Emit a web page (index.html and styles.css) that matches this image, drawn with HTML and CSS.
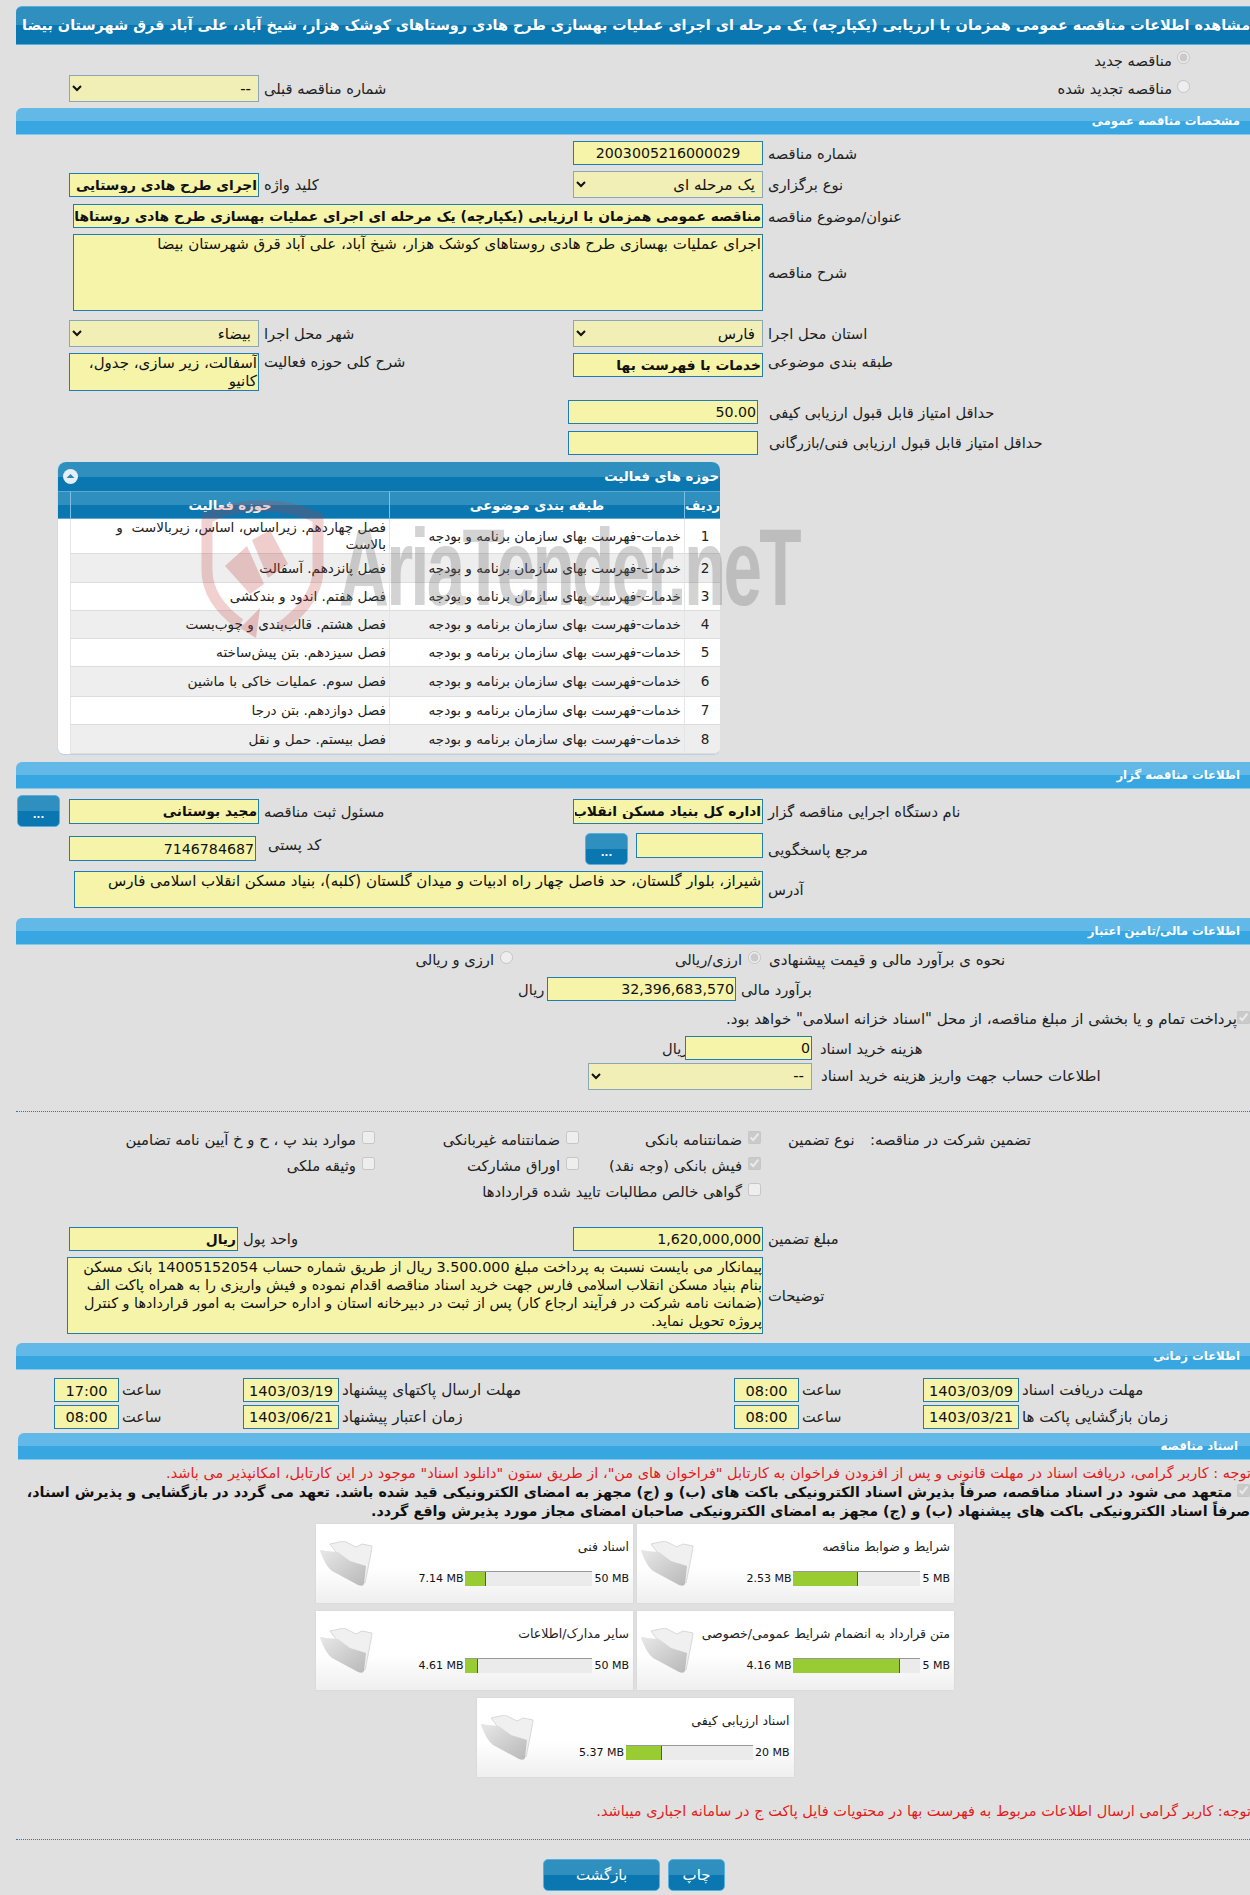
FILE: index.html
```html
<!DOCTYPE html>
<html lang="fa">
<head>
<meta charset="utf-8">
<title>مشاهده اطلاعات مناقصه</title>
<link rel="stylesheet" href="styles.css">
</head>
<body>
<div class="page">
  <div class="title-bar"><span>مشاهده اطلاعات مناقصه عمومی همزمان با ارزیابی (یکپارچه) یک مرحله ای اجرای عملیات بهسازی طرح هادی روستاهای کوشک هزار، شیخ آباد، علی آباد قرق شهرستان بیضا</span></div>

  <div class="row h30"><div class="radio-right first"><input type="radio" disabled checked><label>مناقصه جدید</label></div></div>
  <div class="row h27">
    <div class="cell-l"><select class="sel w190" dir="rtl" disabled><option>--</option></select><label>شماره مناقصه قبلی</label></div>
    <div class="radio-right push"><input type="radio" disabled><label>مناقصه تجدید شده</label></div>
  </div>

  <div class="section mt6">مشخصات مناقصه عمومی</div>

  <div class="row h24 mt6">
    <div class="cell-l"></div>
    <div class="cell-r"><input class="inp w190 center" value="2003005216000029" readonly><label>شماره مناقصه</label></div>
  </div>
  <div class="row h27 mt6">
    <div class="cell-l"><input class="inp w190 bold" value="اجرای طرح هادی روستایی" readonly><label>کلید واژه</label></div>
    <div class="cell-r"><select class="sel w190" dir="rtl" disabled><option>یک مرحله ای</option></select><label>نوع برگزاری</label></div>
  </div>
  <div class="row h24 mt6">
    <div class="cell-wide"><input class="inp w690 bold" value="مناقصه عمومی همزمان با ارزیابی (یکپارچه) یک مرحله ای اجرای عملیات بهسازی طرح هادی روستاهای کوشک هزار، شیخ آباد" readonly><label>عنوان/موضوع مناقصه</label></div>
  </div>
  <div class="row h77 mt6">
    <div class="cell-wide"><textarea class="inp area w690" readonly>اجرای عملیات بهسازی طرح هادی روستاهای کوشک هزار، شیخ آباد، علی آباد قرق شهرستان بیضا</textarea><label>شرح مناقصه</label></div>
  </div>
  <div class="row h27 mt9">
    <div class="cell-l"><select class="sel w190" dir="rtl" disabled><option>بیضاء</option></select><label>شهر محل اجرا</label></div>
    <div class="cell-r"><select class="sel w190" dir="rtl" disabled><option>فارس</option></select><label>استان محل اجرا</label></div>
  </div>
  <div class="row h38 mt6 top">
    <div class="cell-l"><textarea class="inp area w190 h38" readonly>آسفالت، زیر سازی، جدول، کانیو</textarea><label>شرح کلی حوزه فعالیت</label></div>
    <div class="cell-r"><input class="inp w190 h24 bold" value="خدمات با فهرست بها" readonly><label>طبقه بندی موضوعی</label></div>
  </div>
  <div class="row h24 mt9">
    <div class="cell-score"><input class="inp w190 big" value="50.00" readonly><label>حداقل امتیاز قابل قبول ارزیابی کیفی</label></div>
  </div>
  <div class="row h25 mt6">
    <div class="cell-score"><input class="inp w190" value="" readonly><label>حداقل امتیاز قابل قبول ارزیابی فنی/بازرگانی</label></div>
  </div>

  <div class="panel">
    <div class="panel-head"><span class="collapse"><svg viewBox="0 0 15 15" width="15" height="15"><circle cx="7.5" cy="7.5" r="7.5" fill="#e6eff5"/><path d="M3.5 9 L7.5 5 L11.5 9 Z" fill="#2f86b8"/></svg></span><span>حوزه های فعالیت</span></div>
    <table class="grid" dir="rtl">
      <colgroup><col class="c-num"><col class="c-sub"><col class="c-act"><col class="c-pad"></colgroup>
      <thead><tr><th>ردیف</th><th>طبقه بندی موضوعی</th><th>حوزه فعالیت</th><th></th></tr></thead>
      <tbody>
        <tr class="r35"><td class="num">1</td><td>خدمات-فهرست بهای سازمان برنامه و بودجه</td><td>فصل چهاردهم. زیراساس، اساس، زیربالاست&nbsp; و<br>بالاست</td><td class="pad"></td></tr>
        <tr class="alt r29"><td class="num">2</td><td>خدمات-فهرست بهای سازمان برنامه و بودجه</td><td>فصل پانزدهم. آسفالت</td><td class="pad"></td></tr>
        <tr class="r28"><td class="num">3</td><td>خدمات-فهرست بهای سازمان برنامه و بودجه</td><td>فصل هفتم. اندود و بندکشی</td><td class="pad"></td></tr>
        <tr class="alt r28"><td class="num">4</td><td>خدمات-فهرست بهای سازمان برنامه و بودجه</td><td>فصل هشتم. قالب‌بندی و چوب‌بست</td><td class="pad"></td></tr>
        <tr class="r28"><td class="num">5</td><td>خدمات-فهرست بهای سازمان برنامه و بودجه</td><td>فصل سیزدهم. بتن پیش‌ساخته</td><td class="pad"></td></tr>
        <tr class="alt r30"><td class="num">6</td><td>خدمات-فهرست بهای سازمان برنامه و بودجه</td><td>فصل سوم. عملیات خاکی با ماشین</td><td class="pad"></td></tr>
        <tr class="r28"><td class="num">7</td><td>خدمات-فهرست بهای سازمان برنامه و بودجه</td><td>فصل دوازدهم. بتن درجا</td><td class="pad"></td></tr>
        <tr class="alt r29"><td class="num">8</td><td>خدمات-فهرست بهای سازمان برنامه و بودجه</td><td>فصل بیستم. حمل و نقل</td><td class="pad"></td></tr>
      </tbody>
    </table>
    <div class="wm-shield">
      <svg viewBox="0 0 125 140" width="125" height="140"><path d="M62 6 Q30 6 7 18 L7 70 Q7 100 40 124" fill="none" stroke="#c43c3c" stroke-opacity=".24" stroke-width="11"/><path d="M62 6 Q94 6 118 18 L118 70 Q118 100 80 128" fill="none" stroke="#c43c3c" stroke-opacity=".24" stroke-width="11"/><path d="M25 66 L47 46 L64 84 L50 94 Z M52 40 L70 30 L88 64 L68 78 Z" fill="#c43c3c" fill-opacity=".26"/><path d="M40 128 L60 108 L56 138 Z" fill="#c43c3c" fill-opacity=".28"/></svg>
    </div>
    <div class="wm-text" dir="ltr">AriaTender.neT</div>
  </div>

  <div class="section mt8">اطلاعات مناقصه گزار</div>

  <div class="row h32 mt6">
    <div class="cell-l cell-btn"><button class="dots" disabled>...</button><input class="inp w190 h25 bold" value="مجید بوستانی" readonly><label>مسئول ثبت مناقصه</label></div>
    <div class="cell-r"><input class="inp w190 h25 bold" value="اداره کل بنیاد مسکن انقلاب اسلامی فارس" readonly><label>نام دستگاه اجرایی مناقصه گزار</label></div>
  </div>
  <div class="row h31 mt6 top">
    <div class="cell-l drop3"><input class="inp w187 h25 big" value="7146784687" readonly><label class="gap">کد پستی</label></div>
    <div class="cell-ref"><button class="dots" disabled>...</button><input class="inp w127 h25" value="" readonly><label>مرجع پاسخگویی</label></div>
  </div>
  <div class="row h37 mt7">
    <div class="cell-addr"><textarea class="inp area w689" readonly>شیراز، بلوار گلستان، حد فاصل چهار راه ادبیات و میدان گلستان (کلبه)، بنیاد مسکن انقلاب اسلامی فارس</textarea><label>آدرس</label></div>
  </div>

  <div class="section mt10">اطلاعات مالی/تامین اعتبار</div>

  <div class="row h23 mt5 fin-radios">
    <div class="fr-2"><input type="radio" disabled><label>ارزی و ریالی</label></div>
    <div class="fr-1"><input type="radio" disabled checked><label>ارزی/ریالی</label></div>
    <label class="fr-lab">نحوه ی برآورد مالی و قیمت پیشنهادی</label>
  </div>
  <div class="row h24 mt4 est">
    <label class="unit">ریال</label><input class="inp w189 big" value="32,396,683,570" readonly><label>برآورد مالی</label>
  </div>
  <div class="row h24 mt8 treasury"><label>پرداخت تمام و یا بخشی از مبلغ مناقصه، از محل "اسناد خزانه اسلامی" خواهد بود.</label><input type="checkbox" disabled checked></div>
  <div class="row h24 mt3 fee">
    <label class="unit">ریال</label><input class="inp w127 big" value="0" readonly><label>هزینه خرید اسناد</label>
  </div>
  <div class="row h26 mt3 fee-acc">
    <select class="sel w224" dir="rtl" disabled><option>--</option></select><label>اطلاعات حساب جهت واریز هزینه خرید اسناد</label>
  </div>
  <div class="dotted d1"></div>

  <div class="guar" dir="rtl">
    <div class="g-head"><span>تضمین شرکت در مناقصه:</span><span>نوع تضمین</span></div>
    <div class="g-grid">
      <div class="g-item"><input type="checkbox" disabled checked><label>ضمانتنامه بانکی</label></div>
      <div class="g-item"><input type="checkbox" disabled><label>ضمانتنامه غیربانکی</label></div>
      <div class="g-item"><input type="checkbox" disabled><label>موارد بند پ ، ح و خ آیین نامه تضامین</label></div>
      <div class="g-item"><input type="checkbox" disabled checked><label>فیش بانکی (وجه نقد)</label></div>
      <div class="g-item"><input type="checkbox" disabled><label>اوراق مشارکت</label></div>
      <div class="g-item"><input type="checkbox" disabled><label>وثیقه ملکی</label></div>
      <div class="g-item g-span"><input type="checkbox" disabled><label>گواهی خالص مطالبات تایید شده قراردادها</label></div>
    </div>
  </div>

  <div class="row h25 mt19">
    <div class="cell-l"><input class="inp w169 bold" value="ریال" readonly><label>واحد پول</label></div>
    <div class="cell-r"><input class="inp w190 big" value="1,620,000,000" readonly><label>مبلغ تضمین</label></div>
  </div>
  <div class="row h77 mt6">
    <div class="cell-note"><textarea class="inp area w696 note" readonly>پیمانکار می بایست نسبت به پرداخت مبلغ 3.500.000 ریال از طریق شماره حساب 14005152054 بانک مسکن بنام بنیاد مسکن انقلاب اسلامی فارس جهت خرید اسناد مناقصه اقدام نموده و فیش واریزی را به همراه پاکت الف (ضمانت نامه شرکت در فرآیند ارجاع کار) پس از ثبت در دبیرخانه استان و اداره حراست به امور قراردادها و کنترل پروژه تحویل نماید.</textarea><label>توضیحات</label></div>
  </div>

  <div class="section mt9">اطلاعات زمانی</div>

  <div class="row h24 mt8 times">
    <input class="inp w65 tm" value="17:00" readonly><label class="t-l">ساعت</label>
    <input class="inp w96 tm" value="1403/03/19" readonly><label class="t-d">مهلت ارسال پاکتهای پیشنهاد</label>
    <input class="inp w65 tm" value="08:00" readonly><label class="t-l">ساعت</label>
    <input class="inp w96 tm" value="1403/03/09" readonly><label>مهلت دریافت اسناد</label>
  </div>
  <div class="row h25 mt2 times">
    <input class="inp w65 tm" value="08:00" readonly><label class="t-l">ساعت</label>
    <input class="inp w96 tm" value="1403/06/21" readonly><label class="t-d">زمان اعتبار پیشنهاد</label>
    <input class="inp w65 tm" value="08:00" readonly><label class="t-l">ساعت</label>
    <input class="inp w96 tm" value="1403/03/21" readonly><label>زمان بازگشایی پاکت ها</label>
  </div>

  <div class="section s5">اسناد مناقصه</div>

  <p class="note-red n1">توجه : کاربر گرامی، دریافت اسناد در مهلت قانونی و پس از افزودن فراخوان به کارتابل "فراخوان های من"، از طریق ستون "دانلود اسناد" موجود در این کارتابل، امکانپذیر می باشد.</p>
  <p class="commit"><input type="checkbox" disabled checked>متعهد می شود در اسناد مناقصه، صرفاً بذیرش اسناد الکترونیکی باکت های (ب) و (ج) مجهز به امضای الکترونیکی قید شده باشد. تعهد می گردد در بازگشایی و پذیرش اسناد، صرفاً اسناد الکترونیکی باکت های پیشنهاد (ب) و (ج) مجهز به امضای الکترونیکی صاحبان امضای مجاز مورد پذیرش واقع گردد.</p>

  <div class="cards" dir="rtl">
    <div class="card">
      <div class="card-title">شرایط و ضوابط مناقصه</div>
      <div class="card-meter"><span>5 MB</span><div class="bar"><div class="fill" style="width:51%"></div></div><span>2.53 MB</span></div>
      <svg class="folder" viewBox="0 0 53 46" width="53" height="46"><use href="#folder"/></svg>
    </div>
    <div class="card">
      <div class="card-title">اسناد فنی</div>
      <div class="card-meter"><span>50 MB</span><div class="bar"><div class="fill" style="width:16%"></div></div><span>7.14 MB</span></div>
      <svg class="folder" viewBox="0 0 53 46" width="53" height="46"><use href="#folder"/></svg>
    </div>
    <div class="card">
      <div class="card-title">متن قرارداد به انضمام شرایط عمومی/خصوصی</div>
      <div class="card-meter"><span>5 MB</span><div class="bar"><div class="fill" style="width:84%"></div></div><span>4.16 MB</span></div>
      <svg class="folder" viewBox="0 0 53 46" width="53" height="46"><use href="#folder"/></svg>
    </div>
    <div class="card">
      <div class="card-title">سایر مدارک/اطلاعات</div>
      <div class="card-meter"><span>50 MB</span><div class="bar"><div class="fill" style="width:10%"></div></div><span>4.61 MB</span></div>
      <svg class="folder" viewBox="0 0 53 46" width="53" height="46"><use href="#folder"/></svg>
    </div>
    <div class="card">
      <div class="card-title">اسناد ارزیابی کیفی</div>
      <div class="card-meter"><span>20 MB</span><div class="bar"><div class="fill" style="width:28%"></div></div><span>5.37 MB</span></div>
      <svg class="folder" viewBox="0 0 53 46" width="53" height="46"><use href="#folder"/></svg>
    </div>
  </div>

  <p class="note-red n2">توجه: کاربر گرامی ارسال اطلاعات مربوط به فهرست بها در محتویات فایل پاکت ج در سامانه اجباری میباشد.</p>
  <div class="dotted d2"></div>
  <div class="actions">
    <button class="act back" disabled>بازگشت</button>
    <button class="act print" disabled>چاپ</button>
  </div>
</div>
<svg class="defs" width="0" height="0" aria-hidden="true"><defs>
  <linearGradient id="fg" x1="0" y1="0" x2="1" y2="1"><stop offset="0" stop-color="#e8e8e8"/><stop offset="1" stop-color="#b8b8b8"/></linearGradient>
  <g id="folder"><path d="M10 3 L24 0 L36 6 L42 3 L52 5 Q52 8 45 42 L30 30 Z" fill="#f0f0f0" stroke="#d8d8d8"/><path d="M0 10 Q0 8 6 10 L18 11 L30 20 L46 25 L44 43 Q43 46 38 44 L12 30 Q6 26 0 10 Z" fill="url(#fg)"/></g>
</defs></svg>
</body>
</html>
```
FILE: styles.css
```css
* { box-sizing: border-box; }
html, body { margin: 0; padding: 0; background: #e0e0e0; overflow-x: hidden; }
body { width: 1250px; height: 1895px; overflow: hidden; }
.page { width: 1250px; padding: 6px 0 0 16px; font: 14.7px "DejaVu Sans", sans-serif; color: #222; position: relative; }
label { white-space: nowrap; }
.defs { position: absolute; }

.title-bar {
  width: 1254px; height: 39px; border-radius: 6px 0 0 0; overflow: hidden; white-space: nowrap;
  background: linear-gradient(#2f90bf 0 50%, #0a77b0 50% 100%);
  border-top: 1px solid #56aedd; border-bottom: 1px solid #56aedd;
  color: #fff; font-size: 14.4px; font-weight: bold; line-height: 37px; padding-left: 6px; direction: ltr;
}
.title-bar span { direction: rtl; unicode-bidi: embed; display: inline-block; }

.section {
  width: 1234px; height: 27px; border-radius: 6px 0 0 0; direction: rtl;
  background: linear-gradient(#62b9e8 0 50%, #38a6e0 50% 100%);
  border-bottom: 1px solid #7fcbf0; color: #fff; font-size: 11.7px; font-weight: bold; line-height: 26px; padding-right: 10px;
}
.section.s5 { margin: 4px 0 0 2px; width: 1232px; padding-right: 12px; }

.row { display: flex; align-items: center; width: 1234px; }
.row.top { align-items: flex-start; }
.row.top > div { align-items: flex-start; }
.h23 { height: 23px; } .h24 { height: 24px; } .h25 { height: 25px; } .h26 { height: 26px; } .h27 { height: 27px; }
.h30 { height: 30px; } .h31 { height: 31px; } .h32 { height: 32px; } .h37 { height: 37px; } .h38 { height: 38px; } .h77 { height: 77px; }
.mt2 { margin-top: 2px; } .mt3 { margin-top: 3px; } .mt4 { margin-top: 4px; } .mt5 { margin-top: 5px; } .mt6 { margin-top: 6px; } .mt7 { margin-top: 7px; } .mt8 { margin-top: 8px; }
.mt9 { margin-top: 9px; } .mt10 { margin-top: 10px; } .mt19 { margin-top: 19px; }

.cell-l, .cell-r, .cell-wide, .cell-score, .cell-ref, .cell-addr, .cell-note { display: flex; align-items: center; gap: 5px; }
.cell-l { width: 557px; padding-left: 53px; flex: none; }
.cell-r { flex: none; }
.cell-wide { padding-left: 57px; }
.cell-score { padding-left: 552px; }
.cell-score label { margin-left: 6px; }
.cell-ref { margin-left: 12px; flex: none; }
.cell-ref .dots { margin-right: 3px; }
.cell-ref label { margin-top: 8px; }
.cell-addr { padding-left: 58px; }
.cell-note { padding-left: 51px; }
.cell-btn { padding-left: 1px; }
.cell-btn .dots { margin-right: 4px; }
.drop3 { margin-top: 3px; }
.gap { margin-left: 7px; }

.inp, .sel {
  height: 24px; border: 1px solid #1f7db4; border-radius: 0; background: #f6f4a8; color: #111;
  font: 14.2px "DejaVu Sans", sans-serif; padding: 0 1px; direction: rtl; outline: none; flex: none; margin: 0;
}
.sel { height: 27px; background-color: #f1efb6; border-color: #8aa6b8; color: #111; opacity: 1; padding: 0 3px; font-size: 15px; }
.inp.area { resize: none; overflow: hidden; line-height: 18px; padding: 0 1px; font-size: 15px; }
.inp.area.note { font-size: 14.4px; padding: 0; }
.inp.h38 { height: 38px; }
.inp.h24 { height: 24px; }
.inp.h25 { height: 25px; }
.inp.bold { font-weight: bold; font-size: 13.8px; }
.big { font-size: 14.2px; }
.center { text-align: center; direction: ltr; }
.inp.tm { text-align: center; direction: ltr; font-size: 14.6px; }
.w65 { width: 65px; } .w96 { width: 96px; } .w127 { width: 127px; } .w169 { width: 169px; } .w187 { width: 187px; } .w189 { width: 189px; }
.w190 { width: 190px; } .w224 { width: 224px; } .w689 { width: 689px; } .w690 { width: 690px; } .w696 { width: 696px; }
.h77 .inp.area { height: 77px; }
.h37 .inp.area { height: 37px; }

.radio-right { display: flex; align-items: center; direction: rtl; width: 190px; gap: 5px; flex: none; }
.radio-right input { margin: 0 0 5px; }
.radio-right.first { margin-left: 984px; }
.radio-right.push { margin-left: 427px; }

.panel { position: relative; margin: 7px 0 0 42px; width: 662px; height: 292px; background: #fff; border-radius: 8px 8px 6px 6px; box-shadow: 0 1px 0 #b8d4e4, -1px 0 0 #c6dde9; }
.panel-head {
  height: 29px; border-radius: 8px 8px 0 0; display: flex; justify-content: space-between; align-items: center; padding: 0 1px 0 5px;
  background: linear-gradient(#2f90bf 0 50%, #0a77b0 50% 100%); color: #fff; font-weight: bold; font-size: 13.3px; direction: ltr;
}
.collapse { display: flex; }
.grid { width: 662px; border-collapse: separate; border-spacing: 0; table-layout: fixed; font-size: 13.6px; }
.c-num { width: 36px; } .c-sub { width: 295px; } .c-act { width: 319px; } .c-pad { width: 12px; }
.grid th { height: 28px; background: linear-gradient(#2f90bf 0 50%, #0a77b0 50% 100%); color: #fff; font-size: 13.2px; font-weight: bold; padding: 0; border-left: 1px solid #7cc0e4; border-top: 1px solid #58a9d6; border-bottom: 1px solid #58a9d6; }
.grid th:last-child { border-left: 0; }
.grid td { padding: 0 3px; border-left: 1px solid #e6e6e6; border-bottom: 1px solid #dcdcdc; text-align: right; vertical-align: middle; line-height: 17px; background: #fff; }
.grid .alt td { background: #eee; }
.grid td.num { text-align: center; padding-left: 8px; }
.grid td.pad, .grid .alt td.pad { background: transparent; border: 0; }
.grid tr:last-child td.num { border-bottom-right-radius: 6px; }
.grid tr.r35 td { height: 35px; } .grid tr.r30 td { height: 30px; } .grid tr.r29 td { height: 29px; } .grid tr.r28 td { height: 28px; }
.wm-shield { position: absolute; left: 142px; top: 38px; pointer-events: none; }
.wm-text { position: absolute; left: 281px; top: 50px; font: bold 110px/1 "Liberation Sans", sans-serif; color: rgba(110,110,110,.3); letter-spacing: -4.5px; white-space: nowrap; transform: scaleX(.63); transform-origin: 0 0; pointer-events: none; }

.dots { width: 43px; height: 32px; padding: 7px 0 0; border: 1px solid #57b0dd; border-radius: 5px; color: #fff; font: bold 10px "DejaVu Sans", sans-serif; background: linear-gradient(#2f90bf 0 50%, #0a77b0 50% 100%); flex: none; }

.fin-radios { position: relative; direction: ltr; padding-bottom: 4px; }
.fin-radios > div { display: flex; align-items: center; direction: rtl; gap: 6px; }
.fin-radios input { margin: 0 0 4px; }
.fr-2 { margin-left: 404px; width: 93px; flex: none; }
.fr-1 { margin-left: 147px; width: 101px; flex: none; }
.fr-lab { margin-left: 8px; font-size: 15px; }
.est { padding-left: 502px; gap: 5px; }
.unit { width: 24px; text-align: left; }
.treasury { direction: rtl; gap: 0; justify-content: flex-start; width: 1234px; font-size: 15px; padding-bottom: 4px; }
.treasury input { order: -1; margin: 0 0 4px; }
.fee { padding-left: 646px; gap: 8px; }
.fee .unit { margin-right: -9px; }
.fee-acc { padding-left: 572px; gap: 9px; font-size: 15px; }

.dotted { border-top: 1px dotted #1f7db4; width: 1234px; }
.d1 { margin-top: 22px; }
.guar { display: flex; width: 1234px; margin-top: 17px; font-size: 14.8px; }
.g-head { flex: none; display: flex; justify-content: space-between; align-items: flex-start; padding: 2px 219px 0 27px; width: 489px; white-space: nowrap; }
.g-grid { display: grid; grid-template-columns: 182px 204px 260px; grid-auto-rows: 26px; margin: -3px 0 3px; }
.g-item { display: flex; align-items: center; gap: 6px; }
.g-item input { margin: 0 0 4px; }
.g-span { grid-column: 1 / 4; }

.times { gap: 3px; padding-left: 38px; font-size: 15px; }
.times .t-l { width: 118px; flex: none; font-size: 14.5px; }
.times .t-d { width: 389px; flex: none; font-size: 15.2px; }

p { margin: 0; direction: rtl; }
.note-red { color: #e21b1b; font-size: 14.5px; white-space: nowrap; }
.n1 { width: 1235px; margin-top: 4px; line-height: 19px; height: 19px; }
.commit { width: 1234px; font-weight: bold; color: #111; line-height: 19px; font-size: 14.3px; }
.commit input { margin: 0 0 0 5px; }

.cards { display: flex; flex-wrap: wrap; justify-content: center; gap: 8px 4px; width: 638px; margin: 3px 0 0 300px; }
.card { position: relative; width: 317px; height: 79px; background: linear-gradient(#fff 55%, #efefef); box-shadow: 0 0 2px #cfcfcf; padding: 14px 4px 0 0; font-size: 12.5px; color: #222; }
.card-title { line-height: 18px; white-space: nowrap; }
.card-meter { display: flex; align-items: center; margin-top: 15px; gap: 2px; height: 15px; direction: rtl; font-size: 11px; color: #111; }
.card-meter span { flex: none; direction: ltr; unicode-bidi: embed; white-space: nowrap; }
.bar { width: 127px; height: 15px; background: #ebebeb; border-top: 1px solid #999; direction: ltr; flex: none; }
.fill { height: 14px; background: #9c3; border-right: 1px solid #555; }
.folder { position: absolute; left: 4px; top: 17px; }

.n2 { width: 1235px; margin-top: 25px; line-height: 19px; }
.d2 { margin-top: 18px; }
.actions { display: flex; justify-content: flex-start; gap: 8px; margin: 19px 0 0 527px; }
.act { height: 32px; border: 1px solid #57b0dd; border-radius: 5px; color: #fff; font: 15px "DejaVu Sans", sans-serif; background: linear-gradient(#2f90bf 0 50%, #0a77b0 50% 100%); padding: 0; }
.back { width: 117px; } .print { width: 57px; }
```
